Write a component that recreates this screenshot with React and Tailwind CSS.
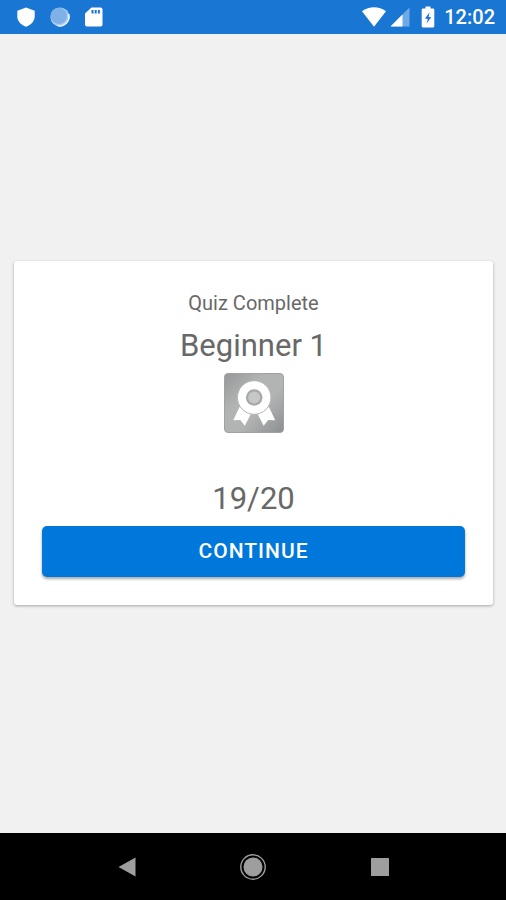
import React from "react";

const ShieldIcon = () => (
  <svg className="h-5 w-5" viewBox="0 0 20 20" fill="#fff">
    <path d="M10 0.5L18.7 3.7V9.5C18.7 14.2 15 18 10 19.8C5 18 1.3 14.2 1.3 9.5V3.7Z" />
  </svg>
);

const SyncIcon = () => (
  <svg className="h-5 w-5" viewBox="0 0 20 20">
    <circle cx="10" cy="10" r="9.6" fill="#a9cbf0" />
    <path d="M18.6 7A9.2 9.2 0 0 1 7.5 18.6" fill="none" stroke="#e4f0fc" strokeWidth="1.6" />
    <circle cx="8.8" cy="8.8" r="8.1" fill="#7fb0e8" />
  </svg>
);

const SdCardIcon = () => (
  <svg className="h-5 w-5" viewBox="0 0 20 20">
    <path d="M7.5 0.5H16.5A2 2 0 0 1 18.5 2.5V17.5A2 2 0 0 1 16.5 19.5H3A2 2 0 0 1 1 17.5V6.5Z" fill="#fff" />
    <path d="M7.5 3h2v3.5h-2zM10.7 3h2v3.5h-2zM13.9 3h2v3.5h-2z" fill="#1976d2" />
  </svg>
);

const WifiIcon = () => (
  <svg className="h-5 w-6" viewBox="0 0 24 20" fill="#fff">
    <path d="M0 4.2C7 -1 17 -1 24 4.2L12 19.8Z" />
  </svg>
);

const SignalIcon = () => (
  <svg className="h-5 w-5" viewBox="0 0 20 20">
    <path d="M19.5 0.5V19.5H0.5Z" fill="#70a9e3" />
    <path d="M12.5 7.5V19.5H0.5Z" fill="#fff" />
  </svg>
);

const BatteryIcon = () => (
  <svg className="h-[22px] w-[14px]" viewBox="0 0 14 22">
    <path d="M4.5 0.5H9.5V2.5H12A1.3 1.3 0 0 1 13.3 3.8V20.2A1.3 1.3 0 0 1 12 21.5H2A1.3 1.3 0 0 1 0.7 20.2V3.8A1.3 1.3 0 0 1 2 2.5H4.5Z" fill="#fff" />
    <path d="M8.6 6.3L4 12.6L6.8 12.9L5.6 17.6L10.2 11.3L7.6 11Z" fill="#1976d2" />
  </svg>
);

const RibbonBadge = () => (
  <svg className="h-[60px] w-[60px]" viewBox="0 0 60 60" role="img" aria-label="Silver award">
    <defs>
      <linearGradient id="silver" x1="0" y1="0" x2="1" y2="1">
        <stop offset="0" stopColor="#959798" />
        <stop offset="0.35" stopColor="#b2b4b4" />
        <stop offset="0.6" stopColor="#b2b4b4" />
        <stop offset="1" stopColor="#8c8f90" />
      </linearGradient>
    </defs>
    <rect x="0.5" y="0.5" width="59" height="59" rx="3.5" fill="url(#silver)" stroke="#a0a2a3" />
    <path d="M15.5 34L9.3 47.2L16.3 47L20.8 52.8L28.4 38Z" fill="#fff" />
    <path d="M45 34L51.2 47.2L44.2 47L39.7 52.8L32.1 38Z" fill="#fff" />
    <circle cx="30.2" cy="24.5" r="16.8" fill="#fff" stroke="#b2b4b4" strokeWidth="1" />
    <circle cx="30.2" cy="24.5" r="8.3" fill="#a6a8a9" />
    <circle cx="30.2" cy="24.5" r="6" fill="#c6c8c8" />
  </svg>
);

const StatusBar = () => (
  <header className="flex h-[34px] items-center justify-between bg-[#1976d2] pr-[11px] pl-4 text-white">
    <div className="flex items-center gap-[14px]">
      <ShieldIcon />
      <SyncIcon />
      <SdCardIcon />
    </div>
    <div className="flex items-center">
      <WifiIcon />
      <span className="ml-1">
        <SignalIcon />
      </span>
      <span className="ml-[11px]">
        <BatteryIcon />
      </span>
      <time className="ml-[9px] text-[20px] leading-6 font-medium">12:02</time>
    </div>
  </header>
);

const QuizResult = ({ title, score, total }) => (
  <section className="flex flex-col items-center rounded-[3px] bg-white p-7 text-[#686868] shadow-[0_1px_3px_rgba(0,0,0,0.32)]">
    <p className="text-[20px] leading-7">Quiz Complete</p>
    <h1 className="mt-[2px] text-[31px] leading-[54px]">{title}</h1>
    <RibbonBadge />
    <p className="mt-[39px] text-[31px] leading-[54px]">
      {score}/{total}
    </p>
    <button
      type="button"
      className="h-[51px] w-full rounded-[5px] bg-[#0078db] pt-[2px] text-[21px] font-medium tracking-[1px] text-white shadow-[0_2px_3px_rgba(0,0,0,0.35)]"
    >
      CONTINUE
    </button>
  </section>
);

const NavigationBar = () => (
  <nav className="flex h-[67px] justify-center bg-black text-[#9e9e9e]">
    <div className="grid w-3/4 grid-cols-3">
      <button type="button" aria-label="Back" className="flex items-center justify-center">
        <svg className="h-5 w-5" viewBox="0 0 20 20" fill="currentColor">
          <path d="M18.5 0.5V19.5L1.5 10Z" />
        </svg>
      </button>
      <button type="button" aria-label="Home" className="flex items-center justify-center">
        <svg className="h-7 w-7" viewBox="0 0 28 28" fill="currentColor">
          <circle cx="14" cy="14" r="9.5" />
          <circle cx="14" cy="14" r="12.2" fill="none" stroke="currentColor" strokeWidth="1.4" />
        </svg>
      </button>
      <button type="button" aria-label="Recent apps" className="flex items-center justify-center">
        <svg className="h-[18px] w-[18px]" viewBox="0 0 18 18" fill="currentColor">
          <rect width="18" height="18" rx="0.5" />
        </svg>
      </button>
    </div>
  </nav>
);

export default function App() {
  return (
    <div className="flex min-h-screen flex-col bg-[#f1f1f1] font-['Roboto',sans-serif]">
      <StatusBar />
      <main className="flex flex-1 flex-col justify-center pr-[13px] pb-[2px] pl-[14px]">
        <QuizResult title="Beginner 1" score={19} total={20} />
      </main>
      <NavigationBar />
    </div>
  );
}
